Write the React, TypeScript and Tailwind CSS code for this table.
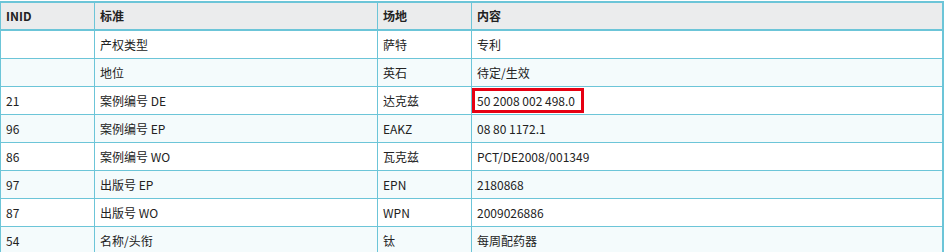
import React from 'react';

const rows = [
  { inid: '', label: '产权类型', field: '萨特', value: '专利' },
  { inid: '', label: '地位', field: '英石', value: '待定/生效' },
  { inid: '21', label: '案例编号 DE', field: '达克兹', value: '50 2008 002 498.0', mark: true },
  { inid: '96', label: '案例编号 EP', field: 'EAKZ', value: '08 80 1172.1' },
  { inid: '86', label: '案例编号 WO', field: '瓦克兹', value: 'PCT/DE2008/001349' },
  { inid: '97', label: '出版号 EP', field: 'EPN', value: '2180868' },
  { inid: '87', label: '出版号 WO', field: 'WPN', value: '2009026886' },
  { inid: '54', label: '名称/头衔', field: '钛', value: '每周配药器' },
];

const font = { fontFamily: '"Noto Sans CJK SC", "Noto Sans", sans-serif' };

export default function App() {
  return (
    <div className="w-[944px] h-[252px] bg-white overflow-hidden pt-px" style={font}>
      <div className="border-t-2 border-l border-r-2 border-[#6cc5d8] text-[12px] text-[#222]">
        {/* header */}
        <div className="flex h-[28px] bg-[#ebeced] border-b-2 border-[#6cc5d8] font-bold">
          <div className="w-[93px] flex items-center pl-[5px]">INID</div>
          <div className="w-[283px] flex items-center pl-[5px] border-l border-[#6cc5d8]">标准</div>
          <div className="w-[94px] flex items-center pl-[5px] border-l border-[#6cc5d8]">场地</div>
          <div className="flex-1 flex items-center pl-[5px] border-l border-[#6cc5d8]">内容</div>
        </div>
        {rows.map((r, i) => (
          <div
            key={i}
            className={`flex h-[28px] border-b border-[#6cc5d8] ${i % 2 === 1 ? 'bg-[#f4fbfc]' : 'bg-white'}`}
          >
            <div className="w-[93px] flex items-center pl-[5px]">{r.inid}</div>
            <div className="w-[283px] flex items-center pl-[5px] border-l border-[#6cc5d8]">{r.label}</div>
            <div className="w-[94px] flex items-center pl-[5px] border-l border-[#6cc5d8]">{r.field}</div>
            <div className="flex-1 flex items-center pl-[5px] border-l border-[#6cc5d8] relative">
              {r.value}
              {r.mark && (
                <div className="absolute left-0 top-px w-[112px] h-[25px] border-[3px] border-[#e60012]" />
              )}
            </div>
          </div>
        ))}
      </div>
    </div>
  );
}
